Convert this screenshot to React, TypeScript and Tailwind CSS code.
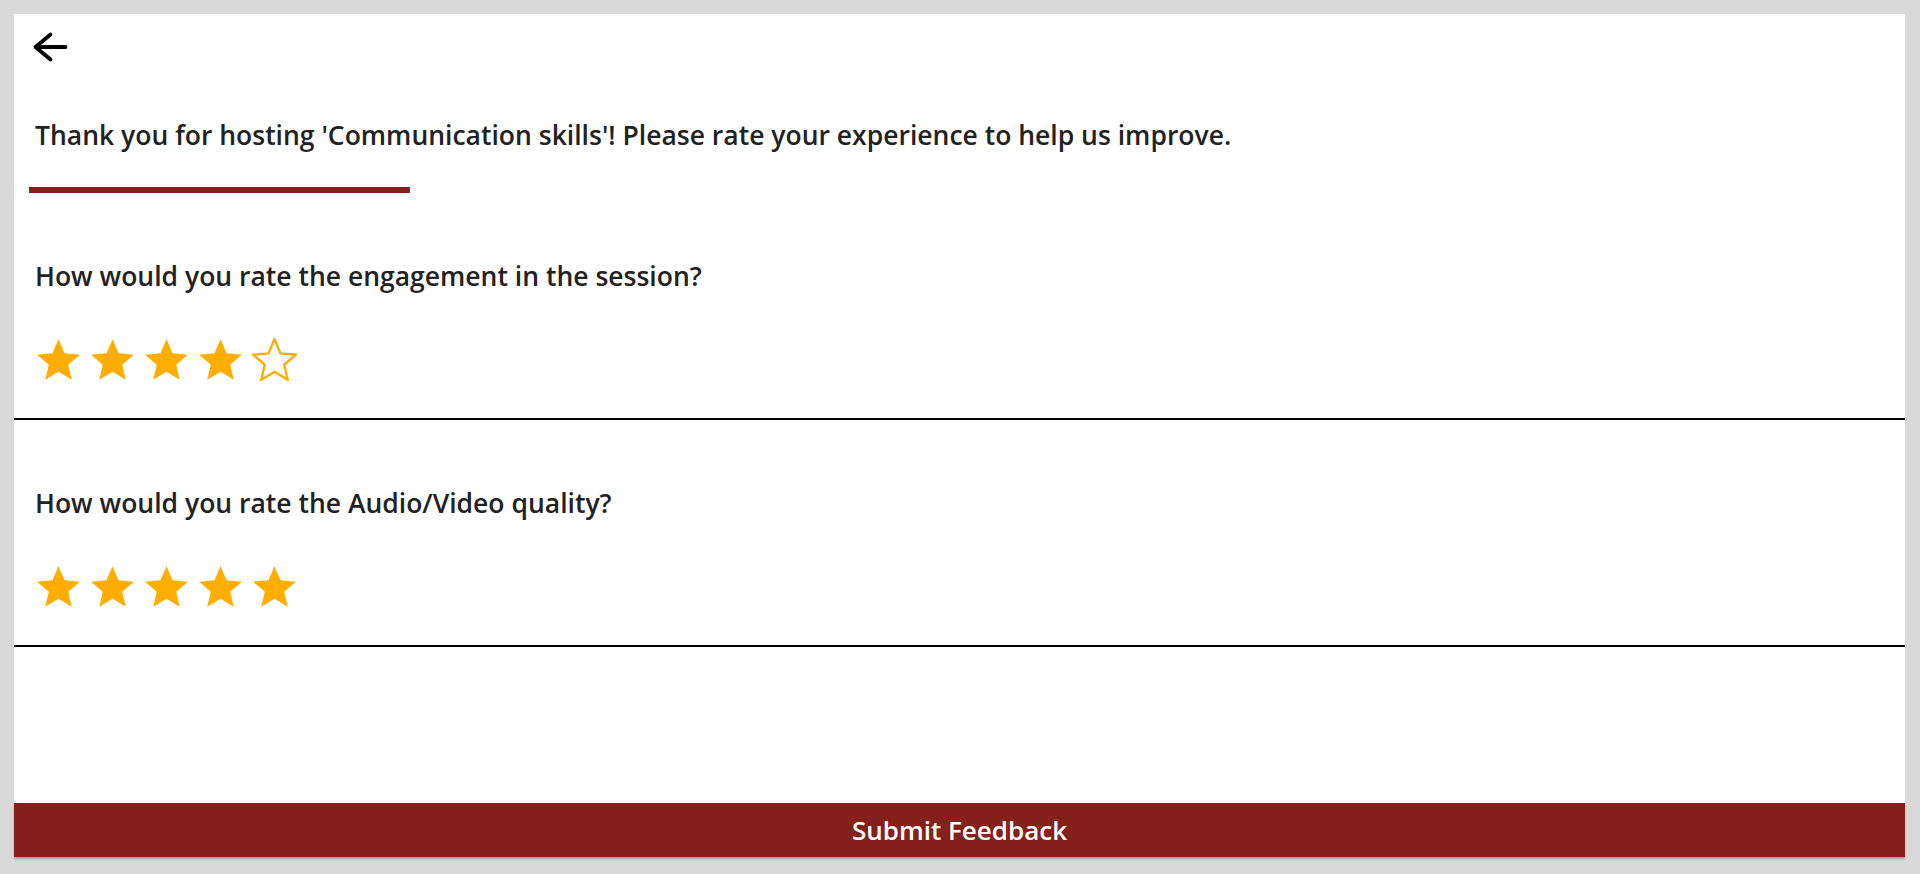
import React, { useState } from "react";

const STAR_PATH =
  "M12 17.27L18.18 21l-1.64-7.03L22 9.24l-7.19-.61L12 2 9.19 8.63 2 9.24l5.46 4.73L5.82 21z";

function Star({ filled }: { filled: boolean }) {
  return (
    <svg width={45} height={43} viewBox="1.5 1.5 21 20" className="block">
      <path
        d={STAR_PATH}
        fill={filled ? "#ffad00" : "none"}
        stroke="#ffad00"
        strokeWidth={filled ? 0 : 1.1}
        strokeLinejoin="miter"
      />
    </svg>
  );
}

function RatingQuestion({
  question,
  value,
  onChange,
}: {
  question: string;
  value: number;
  onChange: (v: number) => void;
}) {
  return (
    <section className="pl-[21px] pr-[20px] pt-[67px] pb-[37px] border-b-2 border-black">
      <h2 className="text-[26.5px] leading-[32px] font-semibold text-[#222]">{question}</h2>
      <div className="flex gap-[9px] ml-[1px] mt-[46px]">
        {[1, 2, 3, 4, 5].map((n) => (
          <button key={n} type="button" onClick={() => onChange(n)} className="p-0">
            <Star filled={n <= value} />
          </button>
        ))}
      </div>
    </section>
  );
}

export default function App() {
  const [engagement, setEngagement] = useState(4);
  const [quality, setQuality] = useState(5);

  return (
    <div
      className="bg-[#d9d9d9] h-[874px] pt-[14px] pb-[17px] pl-[14px] pr-[15px] flex"
      style={{ fontFamily: "'Open Sans', 'Noto Sans', sans-serif" }}
    >
      <div className="bg-white flex-1 flex flex-col">
        {/* Header */}
        <div className="pt-[13px] pl-[14px]">
          <button type="button" className="block">
            <svg width={44} height={40} viewBox="0 0 44 40" fill="none">
              <path
                d="M37.5 20H7.5M22.5 7.5L7.5 20L22.5 32.5"
                stroke="#000"
                strokeWidth={3.8}
                strokeLinecap="round"
                strokeLinejoin="round"
              />
            </svg>
          </button>
        </div>

        <p className="mt-[52px] pl-[21px] pr-[20px] text-[26.5px] leading-[32px] font-semibold text-[#222]">
          Thank you for hosting 'Communication skills'! Please rate your experience to help us
          improve.
        </p>
        <div className="ml-[15px] mt-[36px] w-[381px] h-[6px] bg-[#84211a]" />

        <RatingQuestion
          question="How would you rate the engagement in the session?"
          value={engagement}
          onChange={setEngagement}
        />
        <RatingQuestion
          question="How would you rate the Audio/Video quality?"
          value={quality}
          onChange={setQuality}
        />

        {/* Submit */}
        <button
          type="button"
          className="mt-auto h-[54px] bg-[#84211a] text-white text-[26px] font-semibold shadow-[0_2px_2px_rgba(0,0,0,0.25)]"
        >
          Submit Feedback
        </button>
      </div>
    </div>
  );
}
